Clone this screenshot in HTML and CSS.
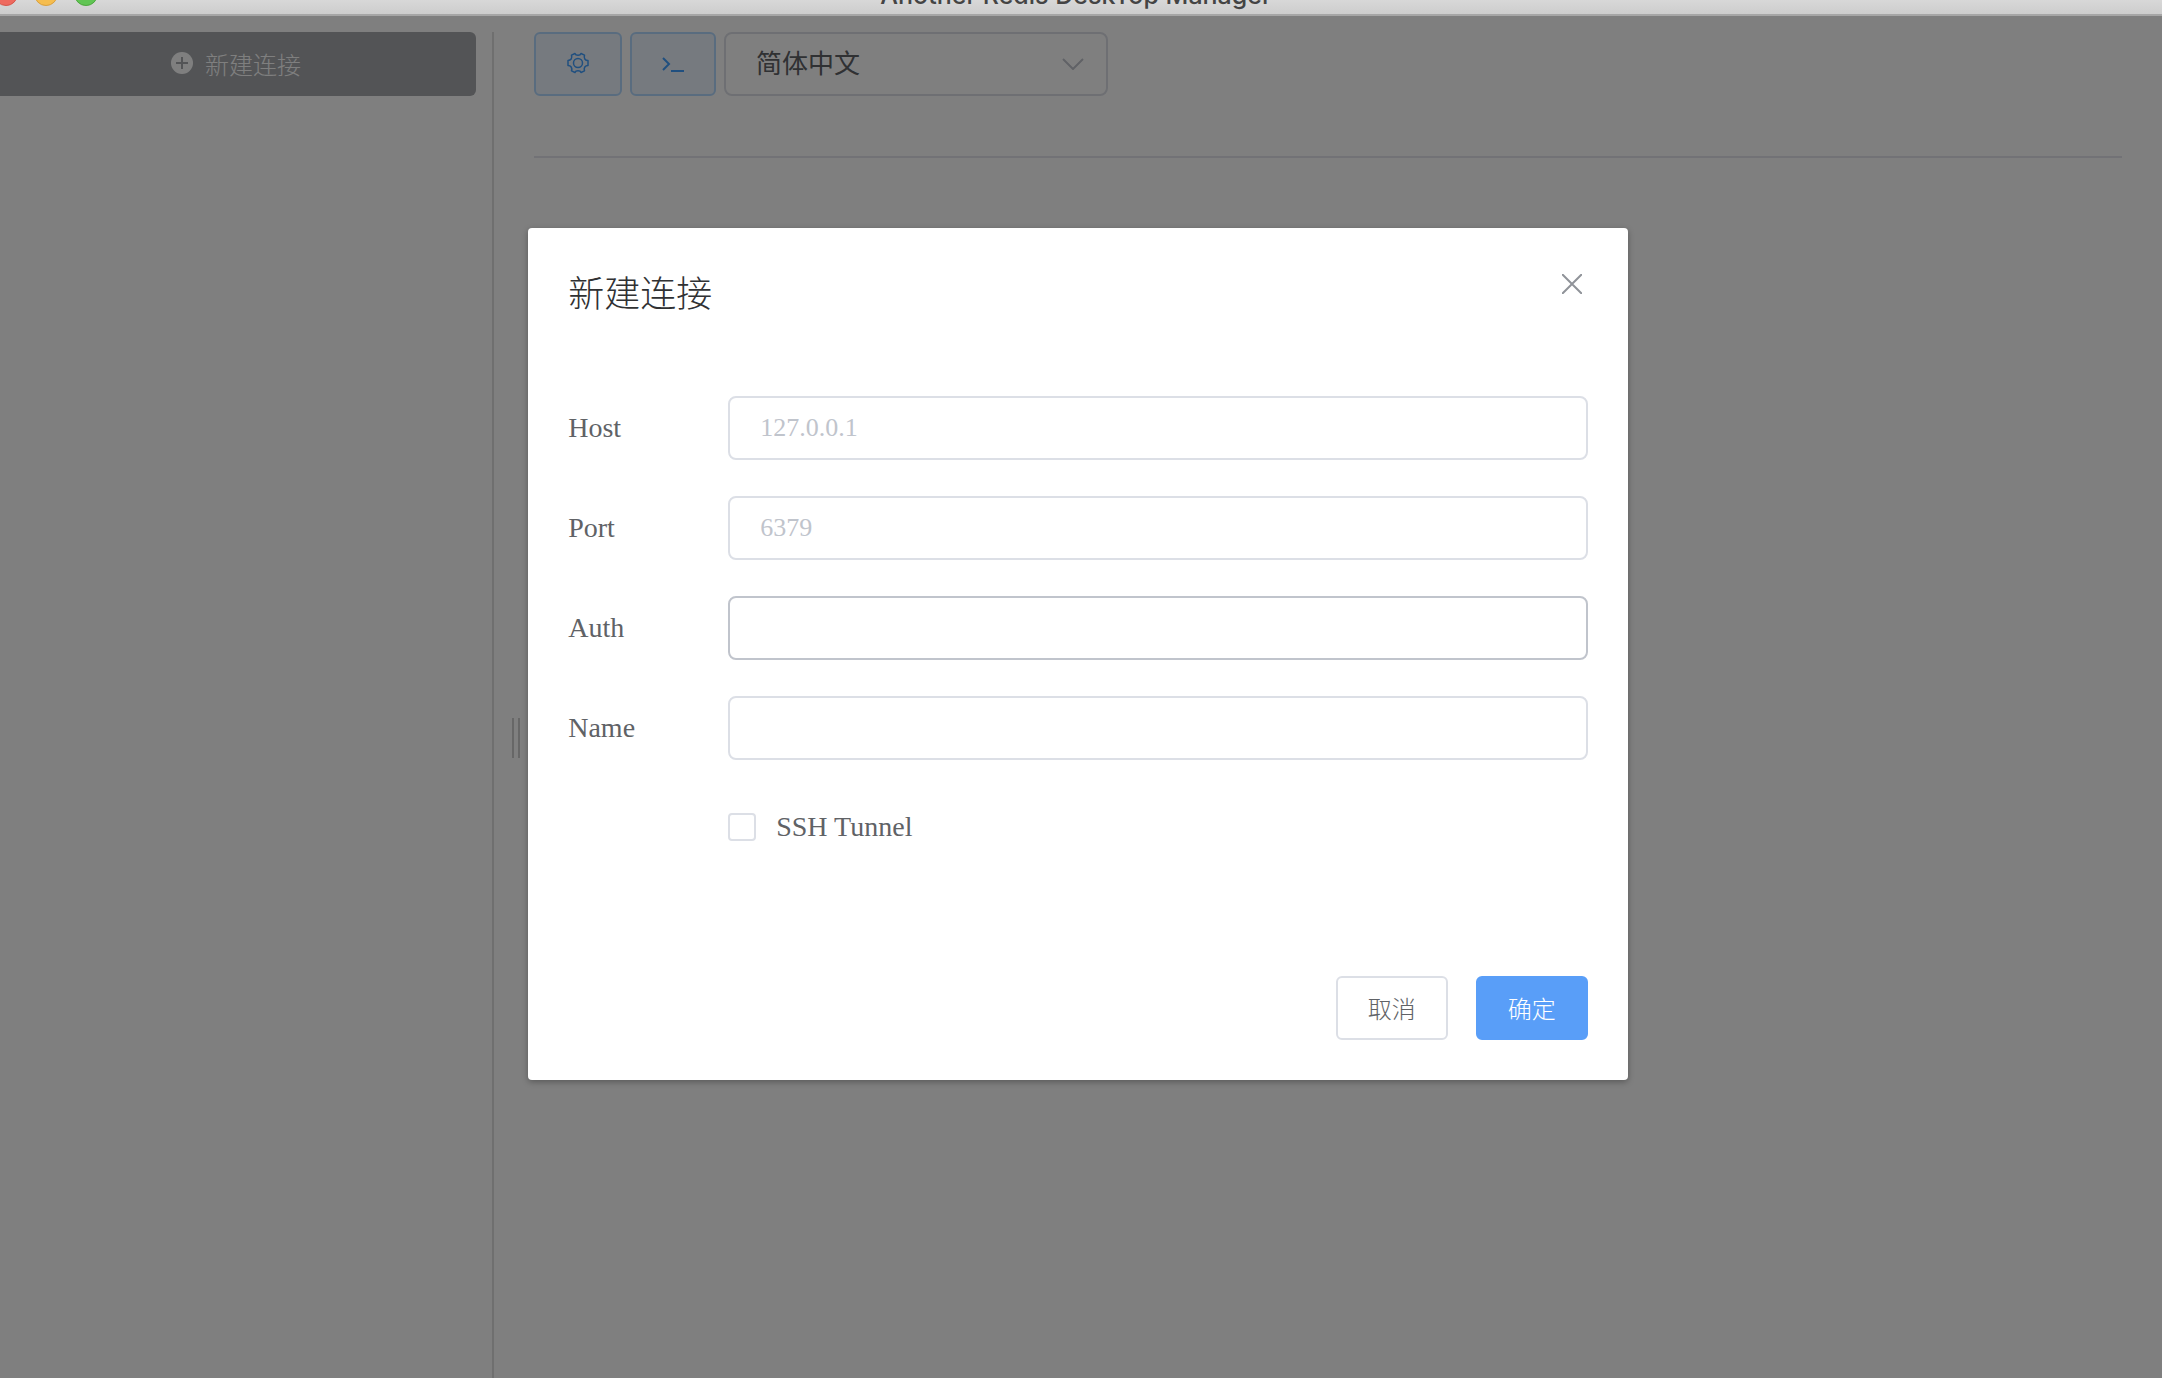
FILE: index.html
```html
<!DOCTYPE html>
<html lang="zh-CN">
<head>
  <meta charset="utf-8">
  <meta name="viewport" content="width=device-width, initial-scale=1">
  <title>Another Redis DeskTop Manager</title>
  <link rel="stylesheet" href="styles.css">
</head>
<body>
  <header class="titlebar">
    <div class="lights">
      <span class="light light-close"></span>
      <span class="light light-min"></span>
      <span class="light light-max"></span>
    </div>
    <div class="titlebar-text">Another Redis DeskTop Manager</div>
  </header>

  <div class="workspace">
    <aside class="sidebar">
      <button class="btn btn-new" type="button">
        <svg class="icon-plus" viewBox="0 0 22 22" aria-hidden="true">
          <circle cx="11" cy="11" r="11" fill="currentColor"/>
          <path d="M11 5v12M5 11h12" stroke="#a6a9ad" stroke-width="2"/>
        </svg>
        <span>新建连接</span>
      </button>
    </aside>
    <div class="splitter"><span class="grip"></span></div>
    <main class="content">
      <div class="toolbar">
        <button class="btn btn-plain" type="button" aria-label="设置">
          <svg width="24" height="24" viewBox="0 0 24 24" fill="none" stroke="currentColor" stroke-width="1.500" stroke-linejoin="round" aria-hidden="true">
            <path d="M9 2.500Q9.500 4.300 12 4.300T15 2.500L18.500 4.200Q17.800 6.500 18.800 8T22 9.500V14.500Q19.800 14.600 18.800 16T18.500 19.800L15 21.500Q14.500 19.700 12 19.700T9 21.500L5.500 19.800Q6.200 17.500 5.200 16T2 14.500V9.500Q4.200 9.400 5.200 8T5.500 4.200Z"/>
            <circle cx="12" cy="12" r="4.500"/>
          </svg>
        </button>
        <button class="btn btn-plain" type="button" aria-label="命令行">
          <svg width="22" height="22" viewBox="0 0 22 22" fill="none" stroke="currentColor" stroke-width="2" aria-hidden="true">
            <path d="M1 6l6 6-6 6M9 19H22"/>
          </svg>
        </button>
        <div class="select-wrap">
          <select class="field select" aria-label="语言">
            <option>简体中文</option>
          </select>
          <svg class="chevron" width="22" height="12" viewBox="0 0 22 12" fill="none" stroke="currentColor" stroke-width="2" aria-hidden="true">
            <path d="M1 1l10 10L21 1"/>
          </svg>
        </div>
      </div>
      <hr class="rule">
    </main>

    <div class="overlay">
      <form class="dialog" role="dialog" aria-labelledby="dialog-title">
        <div class="dialog-head">
          <h1 class="dialog-title" id="dialog-title">新建连接</h1>
          <button class="dialog-close" type="button" aria-label="关闭">
            <svg width="20" height="20" viewBox="0 0 20 20" stroke="currentColor" stroke-width="2" aria-hidden="true">
              <path d="M0 0l20 20M20 0L0 20"/>
            </svg>
          </button>
        </div>
        <div class="dialog-body">
          <div class="row">
            <label class="label" for="host">Host</label>
            <input class="field" id="host" type="text" placeholder="127.0.0.1">
          </div>
          <div class="row">
            <label class="label" for="port">Port</label>
            <input class="field" id="port" type="text" placeholder="6379">
          </div>
          <div class="row">
            <label class="label" for="auth">Auth</label>
            <input class="field field-hover" id="auth" type="text">
          </div>
          <div class="row">
            <label class="label" for="name">Name</label>
            <input class="field" id="name" type="text">
          </div>
          <div class="row row-check">
            <input class="checkbox" id="ssh" type="checkbox">
            <label for="ssh">SSH Tunnel</label>
          </div>
        </div>
        <div class="dialog-foot">
          <button class="btn" type="button">取消</button>
          <button class="btn btn-primary" type="button">确定</button>
        </div>
      </form>
    </div>
  </div>
</body>
</html>
```
FILE: styles.css
```css
* {
  box-sizing: border-box;
}

body {
  margin: 0;
  min-height: 100vh;
  display: flex;
  flex-direction: column;
  background: #fff;
  color: #606266;
  font-family: "Liberation Serif", "Noto Sans CJK SC", serif;
  font-size: 28px;
}

/* Title bar */
.titlebar {
  position: relative;
  display: flex;
  align-items: flex-end;
  justify-content: center;
  height: 16px;
  padding-right: 10px;
  overflow: hidden;
  background: linear-gradient(#d8d8d8, #cdcdcd);
  border-bottom: 2px solid #a6a6a6;
}

.titlebar-text {
  color: #444;
  font-family: Inter, sans-serif;
  font-size: 25px;
  font-weight: 500;
  line-height: 38px;
}

.lights {
  position: absolute;
  left: -6px;
  bottom: 8px;
  display: flex;
  gap: 16px;
}

.light {
  width: 24px;
  height: 24px;
  border: 1px solid;
  border-radius: 50%;
}

.light-close {
  background: #ee6a5f;
  border-color: #d5564c;
}

.light-min {
  background: #f5bd4f;
  border-color: #d8a040;
}

.light-max {
  background: #61c554;
  border-color: #4ea73f;
}

/* Window body */
.workspace {
  position: relative;
  flex: 1;
  display: flex;
  padding-top: 16px;
}

.sidebar {
  width: 494px;
  padding-right: 16px;
  border-right: 2px solid #dedede;
}

.splitter {
  display: flex;
  align-items: center;
  width: 40px;
  padding: 66px 0 0 18px;
}

.grip {
  width: 8px;
  height: 40px;
  border: solid #cfcfcf;
  border-width: 0 2px;
}

.content {
  flex: 1;
  padding-right: 40px;
}

.toolbar {
  display: flex;
  gap: 8px;
}

.rule {
  margin: 60px 0 0;
  border: 0;
  border-top: 2px solid #e4e4ec;
}

/* Controls */
.btn {
  display: flex;
  align-items: center;
  justify-content: center;
  height: 64px;
  min-width: 86px;
  padding: 0 30px 2px;
  border: 2px solid #dcdfe6;
  border-radius: 6px;
  background: #fff;
  color: #606266;
  font-family: inherit;
  font-size: 24px;
  font-weight: 300;
}

.btn-new {
  gap: 12px;
  width: 100%;
  padding-right: 34px;
  border: 0;
  border-radius: 0 6px 6px 0;
  background: #a6a9ad;
  color: #fff;
}

.icon-plus {
  width: 22px;
  height: 22px;
}

.btn-plain {
  border-color: #b3d8ff;
  background: #ecf5ff;
  color: #409eff;
}

.btn-primary {
  border-color: #599ef8;
  background: #599ef8;
  color: #fff;
}

.field {
  flex: 1;
  min-width: 0;
  height: 64px;
  padding: 0 30px;
  border: 2px solid #dcdfe6;
  border-radius: 8px;
  background: #fff;
  color: #606266;
  font-family: inherit;
  font-size: 26px;
}

.field::placeholder {
  color: #c0c4cc;
  opacity: 1;
}

.field-hover {
  border-color: #c0c4cc;
}

.select-wrap {
  position: relative;
  display: flex;
  width: 384px;
}

.select {
  appearance: none;
}

.chevron {
  position: absolute;
  top: 26px;
  right: 24px;
  color: #c0c4cc;
  pointer-events: none;
}

/* Dialog */
.overlay {
  position: absolute;
  inset: 0;
  display: flex;
  align-items: flex-start;
  justify-content: center;
  padding: 212px 6px 0 0;
  background: rgba(0, 0, 0, 0.5);
}

.dialog {
  width: 51%;
  padding: 40px;
  border-radius: 4px;
  background: #fff;
  box-shadow: 0 2px 6px rgba(0, 0, 0, 0.3);
}

.dialog-head {
  display: flex;
  align-items: flex-start;
  justify-content: space-between;
}

.dialog-title {
  margin: 0;
  color: #303133;
  font-size: 36px;
  font-weight: 300;
  line-height: 54px;
}

.dialog-close {
  display: flex;
  padding: 6px;
  border: 0;
  background: none;
  color: #909399;
}

.dialog-body {
  display: flex;
  flex-direction: column;
  gap: 36px;
  padding: 74px 0 116px;
}

.row {
  display: flex;
  align-items: center;
  height: 64px;
}

.label {
  width: 160px;
}

.row-check {
  gap: 20px;
  padding: 0 0 2px 160px;
}

.checkbox {
  appearance: none;
  width: 28px;
  height: 28px;
  margin: 0;
  border: 2px solid #dcdfe6;
  border-radius: 4px;
  background: #fff;
}

.checkbox:checked {
  border-color: #599ef8;
  background: #599ef8;
}

.dialog-foot {
  display: flex;
  justify-content: flex-end;
  gap: 28px;
}
```
